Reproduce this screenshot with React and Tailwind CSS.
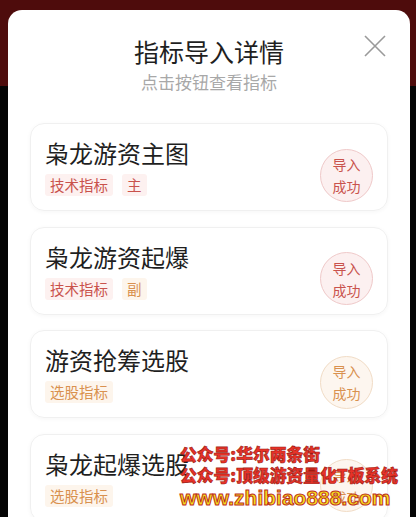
import React from "react";

const items = [
  { name: "枭龙游资主图", tags: [{ t: "技术指标", c: "red" }, { t: "主", c: "red" }], tone: "red" },
  { name: "枭龙游资起爆", tags: [{ t: "技术指标", c: "red" }, { t: "副", c: "orange" }], tone: "red" },
  { name: "游资抢筹选股", tags: [{ t: "选股指标", c: "orange" }], tone: "orange" },
  { name: "枭龙起爆选股", tags: [{ t: "选股指标", c: "orange" }], tone: "orange" },
];

const tagCls = {
  red: "bg-[#fdf1f0] text-[#c9524c]",
  orange: "bg-[#fdf5ec] text-[#d9914f]",
};

const badgeCls = {
  red: "bg-[#fcf0f0] border-[#efc9c9] text-[#c9524c]",
  orange: "bg-[#fdf6ef] border-[#f1dcc6] text-[#d9914f]",
};

const App = () => {
  return (
    <div
      className="relative w-[416px] h-[517px] overflow-hidden bg-[#050505]"
      style={{ fontFamily: '"Noto Sans CJK SC", "Noto Sans", sans-serif' }}
    >
      {/* background behind the sheet */}
      <div className="h-[86px] bg-[#4e0c0c]" />

      {/* sheet */}
      <div className="absolute left-[8px] top-[10px] w-[402px] h-[520px] bg-white rounded-t-[14px] flex flex-col">
        <div className="relative flex flex-col items-center pt-[24px]">
          <div className="text-[25px] leading-[34px] text-[#1f1f1f]">指标导入详情</div>
          <div className="text-[17px] leading-[24px] text-[#a8a8a8] mt-[2px]">点击按钮查看指标</div>
          <svg className="absolute right-[24px] top-[25px]" width="22" height="22" viewBox="0 0 22 22">
            <path d="M1 1L21 21M21 1L1 21" stroke="#9a9a9a" strokeWidth="1.6" />
          </svg>
        </div>

        <div className="flex flex-col gap-[15.5px] mt-[29px] mx-[22px]">
          {items.map((item, i) => (
            <div
              key={i}
              className="h-[88px] rounded-[14px] border border-[#f0f0f0] shadow-[0_1px_4px_rgba(0,0,0,0.04)] flex items-center justify-between pl-[14px] pr-[14px]"
            >
              <div className="flex flex-col">
                <div className="text-[24px] leading-[30px] text-[#1f1f1f]">{item.name}</div>
                <div className="flex gap-[9px] mt-[6px]">
                  {item.tags.map((tag, j) => (
                    <span
                      key={j}
                      className={`text-[14.5px] leading-[22px] px-[5px] rounded-[3px] ${tagCls[tag.c]}`}
                    >
                      {tag.t}
                    </span>
                  ))}
                </div>
              </div>
              <div
                className={`w-[53px] h-[53px] mt-[16px] rounded-full border flex flex-col items-center justify-center text-[14px] leading-[22px] ${badgeCls[item.tone]}`}
              >
                <span>导入</span>
                <span>成功</span>
              </div>
            </div>
          ))}
        </div>
      </div>

      {/* watermark */}
      <div className="absolute left-[180px] top-[444px] flex flex-col font-black leading-[21px] whitespace-nowrap">
        <span className="text-[16.8px] text-[#e83228] [-webkit-text-stroke:0.6px_#9b1a12]">公众号:华尔两条街</span>
        <span className="text-[16.8px] text-[#e83228] [-webkit-text-stroke:0.6px_#9b1a12]">公众号:顶级游资量化T板系统</span>
        <span
          className="text-[21px] leading-[24px] text-[#f3e21c] [-webkit-text-stroke:1px_#c0301c]"
          style={{ fontFamily: '"Liberation Sans", sans-serif' }}
        >
          www.zhibiao888.com
        </span>
      </div>
    </div>
  );
};

export default App;
